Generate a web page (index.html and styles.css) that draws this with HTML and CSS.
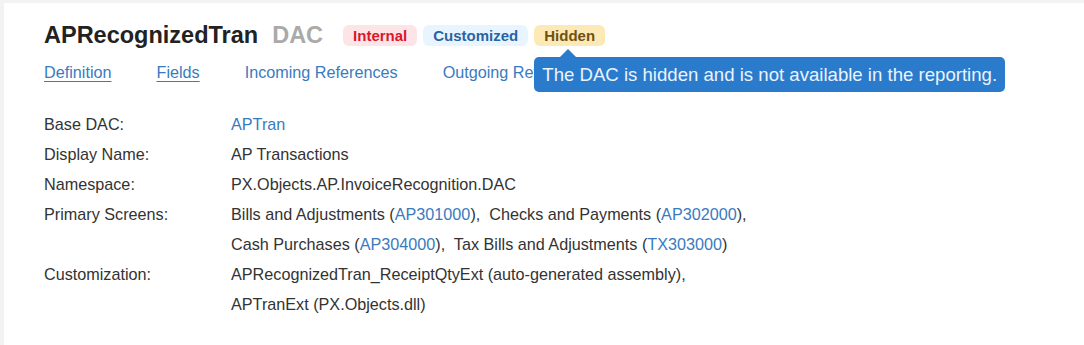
FILE: index.html
```html
<!DOCTYPE html>
<html lang="en">
<head>
    <meta charset="UTF-8">
    <meta name="viewport" content="width=device-width, initial-scale=1.0">
    <title>APRecognizedTran DAC</title>
    <link rel="stylesheet" href="styles.css">
</head>
<body>
    <div class="page">
        <div class="header">
            <h1 class="title">APRecognizedTran</h1>
            <span class="kind">DAC</span>
            <div class="badges">
                <span class="badge badge-internal">Internal</span>
                <span class="badge badge-custom">Customized</span>
                <span class="badge badge-hidden">Hidden
                    <span class="tooltip">The DAC is hidden and is not available in the reporting.</span>
                </span>
            </div>
        </div>
        <nav class="tabs">
            <a href="#" class="tab active">Definition</a>
            <a href="#" class="tab active">Fields</a>
            <a href="#" class="tab">Incoming References</a>
            <a href="#" class="tab">Outgoing References</a>
        </nav>
        <table class="info">
            <tr>
                <th>Base DAC:</th>
                <td><a href="#">APTran</a></td>
            </tr>
            <tr>
                <th>Display Name:</th>
                <td>AP Transactions</td>
            </tr>
            <tr>
                <th>Namespace:</th>
                <td>PX.Objects.AP.InvoiceRecognition.DAC</td>
            </tr>
            <tr>
                <th>Primary Screens:</th>
                <td>Bills and Adjustments (<a href="#">AP301000</a>),&nbsp; Checks and Payments (<a href="#">AP302000</a>),</td>
            </tr>
            <tr>
                <th></th>
                <td>Cash Purchases (<a href="#">AP304000</a>),&nbsp; Tax Bills and Adjustments (<a href="#">TX303000</a>)</td>
            </tr>
            <tr>
                <th>Customization:</th>
                <td>APRecognizedTran_ReceiptQtyExt (auto-generated assembly),</td>
            </tr>
            <tr>
                <th></th>
                <td>APTranExt (PX.Objects.dll)</td>
            </tr>
        </table>
    </div>
</body>
</html>
```

FILE: styles.css
```css
body {
    font-family: "Liberation Sans", Arial, sans-serif;
    background-color: #f3f3f3;
    margin: 0;
    color: #333;
}
.page {
    background-color: #fff;
    margin: 3px 0 0 4px;
    padding: 17px 40px 30px;
    min-height: 295px;
}
.header {
    display: flex;
    align-items: center;
    height: 30px;
}
.title {
    font-size: 23.5px;
    line-height: 30px;
    margin: 0;
    color: #222;
}
.kind {
    font-size: 23.5px;
    font-weight: bold;
    color: #aaa;
    margin-left: 14px;
}
.badges {
    display: flex;
    gap: 6px;
    margin-left: 20px;
}
.badge {
    font-size: 15px;
    font-weight: bold;
    line-height: 17px;
    padding: 2px 10px;
    border-radius: 6px;
}
.badge-internal {
    background-color: #fde4e7;
    color: #d8182c;
}
.badge-custom {
    background-color: #e9f5fe;
    color: #2a63a3;
}
.badge-hidden {
    position: relative;
    background-color: #fde9b6;
    color: #6e5112;
}
.tooltip {
    position: absolute;
    left: 0;
    top: 32px;
    white-space: nowrap;
    background-color: #2b7bcd;
    color: #eaf3fc;
    font-size: 18.6px;
    font-weight: normal;
    line-height: 21px;
    padding: 7px 8px;
    border-radius: 5px;
}
.tooltip::before {
    content: "";
    position: absolute;
    left: 26px;
    top: -8px;
    border: 8px solid transparent;
    border-top: 0;
    border-bottom-color: #2b7bcd;
}
.tabs {
    display: flex;
    gap: 45px;
    margin-top: 10px;
    line-height: 24px;
}
.tab {
    font-size: 16.2px;
    color: #3a7bbf;
    text-decoration: none;
}
.tab.active {
    text-decoration: underline;
    text-underline-offset: 3px;
}
.info {
    margin-top: 25px;
    border-collapse: collapse;
    font-size: 16.2px;
}
.info th, .info td {
    height: 30px;
    padding: 0;
    text-align: left;
    font-weight: normal;
    vertical-align: middle;
}
.info th {
    width: 187px;
}
.info a {
    color: #3a7bbf;
    text-decoration: none;
}
```
